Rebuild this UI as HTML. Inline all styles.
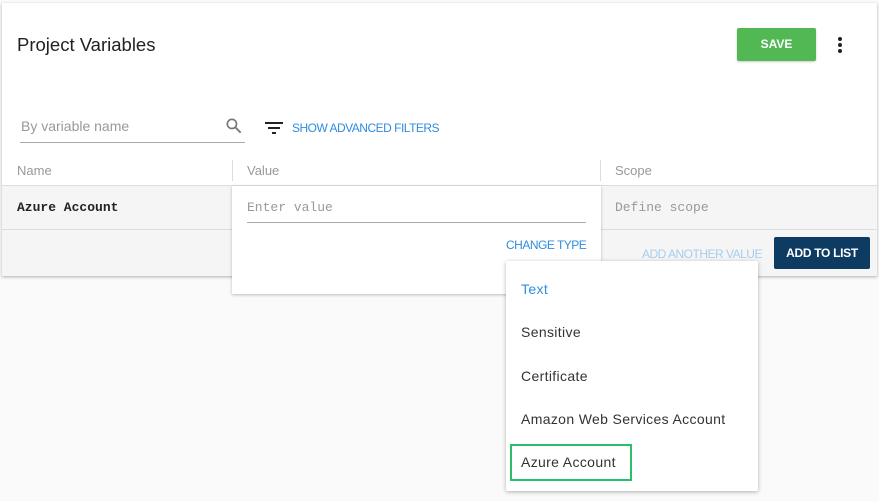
<!DOCTYPE html>
<html><head><style>
*{box-sizing:border-box;margin:0;padding:0}
body{width:879px;height:501px;background:#fafafa;font-family:"Liberation Sans",sans-serif;position:relative;overflow:hidden}
.abs{position:absolute}
.card{left:2px;top:3px;width:875px;height:273px;background:#fff;box-shadow:0 1px 3px rgba(0,0,0,.3)}
.mono{font-family:"Liberation Mono",monospace}
.up{font-size:12px;letter-spacing:-0.5px}
.item{font-size:14px;letter-spacing:0.35px;color:#333}
</style></head><body>
<div class="abs card"></div>
<div class="abs" style="left:17px;top:34px;font-size:18.5px;color:#222">Project Variables</div>
<div class="abs" style="left:737px;top:28px;width:79px;height:33px;background:#52b854;border-radius:2px;color:#fff;font-size:12px;font-weight:bold;text-align:center;line-height:33px;box-shadow:0 1px 2px rgba(0,0,0,.2)">SAVE</div>
<div class="abs" style="left:838px;top:37px;width:4px;height:4px;border-radius:2px;background:#222"></div>
<div class="abs" style="left:838px;top:43px;width:4px;height:4px;border-radius:2px;background:#222"></div>
<div class="abs" style="left:838px;top:49px;width:4px;height:4px;border-radius:2px;background:#222"></div>
<div class="abs" style="left:21px;top:118px;font-size:14px;color:#999">By variable name</div>
<div class="abs" style="left:20px;top:142px;width:225px;height:1px;background:#aaa"></div>
<svg class="abs" style="left:224px;top:116px" width="20" height="20" viewBox="0 0 24 24"><circle cx="9.5" cy="9.5" r="5.5" fill="none" stroke="#777" stroke-width="2"/><path d="M13.5 13.5L20 20" stroke="#777" stroke-width="2.2"/></svg>
<div class="abs" style="left:265px;top:122px;width:18px;height:2px;background:#222"></div>
<div class="abs" style="left:268px;top:127px;width:12px;height:2px;background:#222"></div>
<div class="abs" style="left:272px;top:132px;width:4px;height:2px;background:#222"></div>
<div class="abs up" style="left:292px;top:121px;color:#2f8de0">SHOW ADVANCED FILTERS</div>
<div class="abs" style="left:17px;top:163px;font-size:13px;color:#999">Name</div>
<div class="abs" style="left:232px;top:160px;width:1px;height:21px;background:#ddd"></div>
<div class="abs" style="left:247px;top:163px;font-size:13px;color:#999">Value</div>
<div class="abs" style="left:600px;top:160px;width:1px;height:21px;background:#ddd"></div>
<div class="abs" style="left:615px;top:163px;font-size:13px;color:#999">Scope</div>
<div class="abs" style="left:2px;top:185px;width:875px;height:91px;background:#f5f5f5;border-top:1px solid #ddd"></div>
<div class="abs" style="left:2px;top:229px;width:875px;height:1px;background:#ddd"></div>
<div class="abs mono" style="left:17px;top:200px;font-size:13px;font-weight:bold;color:#222">Azure Account</div>
<div class="abs mono" style="left:615px;top:200px;font-size:13px;color:#999">Define scope</div>
<div class="abs up" style="left:642px;top:247px;color:#a6cdef">ADD ANOTHER VALUE</div>
<div class="abs" style="left:774px;top:237px;width:96px;height:32px;background:#0d3b62;border-radius:2px;color:#fff;font-size:12px;font-weight:bold;letter-spacing:-0.3px;text-align:center;line-height:32px">ADD TO LIST</div>
<div class="abs" style="left:232px;top:186px;width:369px;height:108px;background:#fff;box-shadow:0 1px 3px rgba(0,0,0,.25)"></div>
<div class="abs mono" style="left:247px;top:200px;font-size:13px;color:#999">Enter value</div>
<div class="abs" style="left:247px;top:222px;width:339px;height:1px;background:#aaa"></div>
<div class="abs up" style="left:506px;top:238px;color:#2f8de0">CHANGE TYPE</div>
<div class="abs" style="left:506px;top:261px;width:252px;height:230px;background:#fff;border-radius:2px;box-shadow:0 1px 4px rgba(0,0,0,.3)"></div>
<div class="abs item" style="left:521px;top:281px;color:#2f8de0">Text</div>
<div class="abs item" style="left:521px;top:324px">Sensitive</div>
<div class="abs item" style="left:521px;top:368px">Certificate</div>
<div class="abs item" style="left:521px;top:411px">Amazon Web Services Account</div>
<div class="abs" style="left:510px;top:444px;width:122px;height:37px;border:2px solid #2bbf6a"></div>
<div class="abs item" style="left:521px;top:454px">Azure Account</div>
</body></html>
